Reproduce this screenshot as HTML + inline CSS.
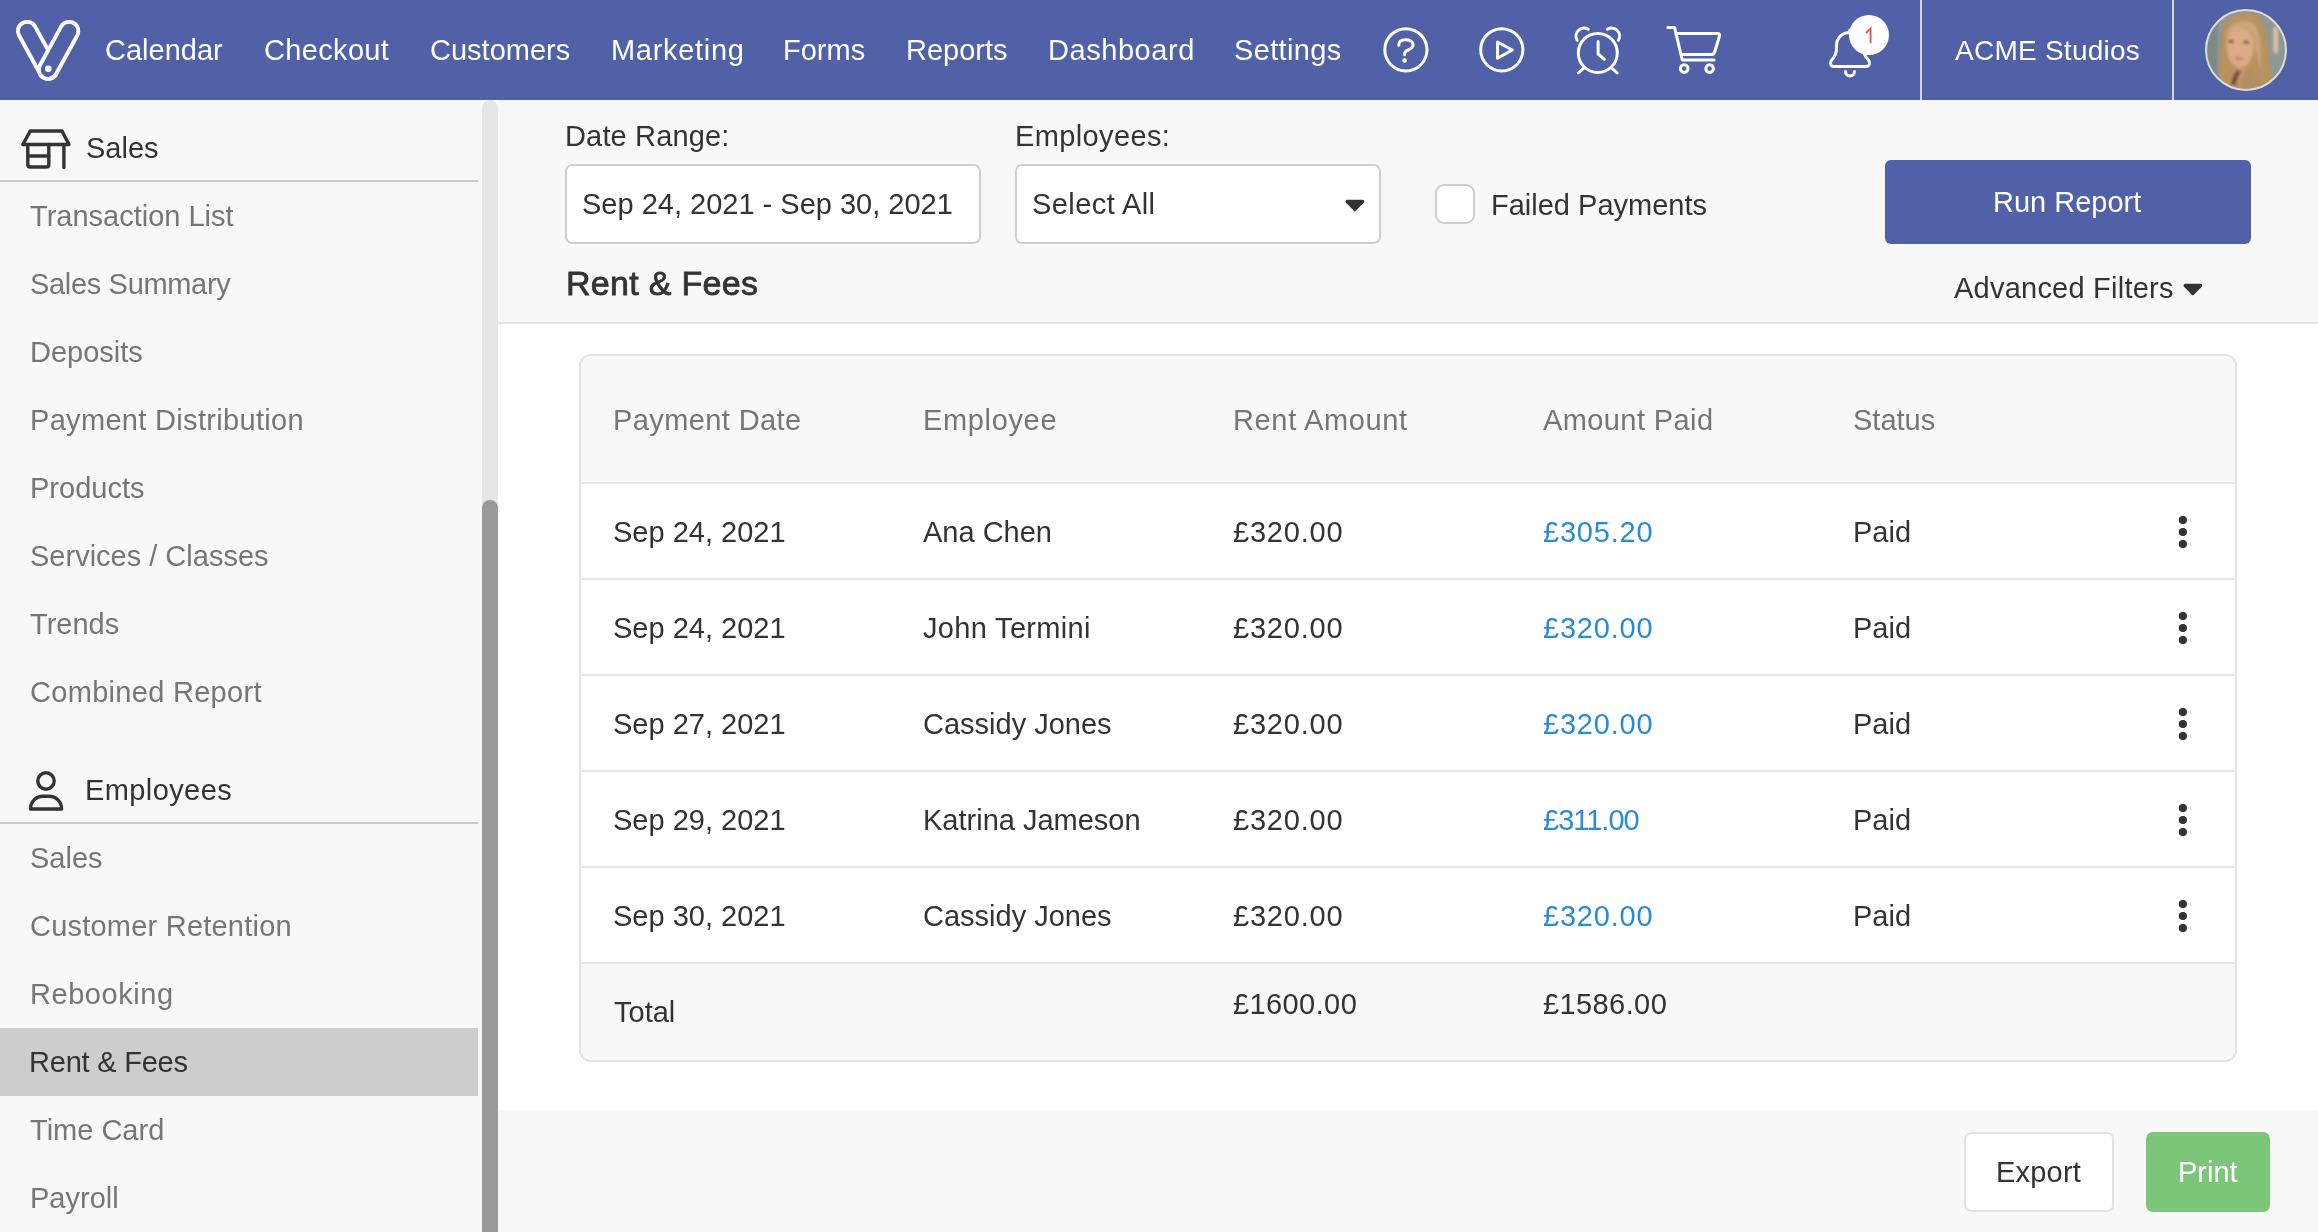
<!DOCTYPE html>
<html>
<head>
<meta charset="utf-8">
<style>
html,body{margin:0;padding:0;width:2318px;height:1232px;overflow:hidden;background:#fff;}
body{position:relative;font-family:"Liberation Sans",sans-serif;-webkit-font-smoothing:antialiased;}
.t{will-change:transform;}
.a{position:absolute;}
.t{position:absolute;white-space:nowrap;font-size:29px;line-height:29px;color:#333;}
#hdr{left:0;top:0;width:2318px;height:100px;background:#5161a8;}
.nav{color:#fff;top:36px;}
#side{left:0;top:100px;width:482px;height:1132px;background:#f8f8f8;}
.si{color:#767676;left:30px;}
.sh{color:#333;left:86px;}
.sdiv{left:0;width:478px;height:2px;background:#cacaca;}
#track{left:482px;top:100px;width:16px;height:1132px;background:#e6e6e6;border-radius:8px 8px 0 0;}
#thumb{left:482px;top:500px;width:16px;height:740px;background:#999;border-radius:8px;}
#topbar{left:498px;top:100px;width:1820px;height:222px;background:#f8f8f8;border-bottom:2px solid #e5e5e5;}
#mainw{left:498px;top:325px;width:1820px;height:785px;background:#fff;}
#foot{left:498px;top:1110px;width:1820px;height:122px;background:#f8f8f8;}
.box{background:#fff;border:2px solid #cfcfcf;border-radius:7px;box-sizing:border-box;}
#card{left:579px;top:354px;width:1658px;height:708px;border:2px solid #e3e3e3;border-radius:12px;box-sizing:border-box;background:#fff;overflow:hidden;}
.rowl{left:0;width:1654px;height:2px;background:#e6e6e6;}
.th{color:#767676;}
.blue{color:#2b8bd6;}
</style>
</head>
<body>
<!-- HEADER -->
<div id="hdr" class="a"></div>
<svg class="a" style="left:0;top:0" width="100" height="100" viewBox="0 0 100 100">
  <g fill="none" stroke="#fff" stroke-width="3.9">
    <rect x="-31.2" y="-9.2" width="62.4" height="18.4" rx="9.2" transform="translate(37.7 50.35) rotate(61.2)"/>
    <rect x="-31.2" y="-9.2" width="62.4" height="18.4" rx="9.2" fill="#5161a8" transform="translate(58.6 50.35) rotate(118.8)"/>
  </g>
  <circle cx="48.3" cy="68.7" r="3.3" fill="#fff"/>
</svg>
<div class="t nav" style="left:105px">Calendar</div>
<div class="t nav" style="left:264px;letter-spacing:0.34px">Checkout</div>
<div class="t nav" style="left:430px">Customers</div>
<div class="t nav" style="left:611px;letter-spacing:0.69px">Marketing</div>
<div class="t nav" style="left:783px">Forms</div>
<div class="t nav" style="left:906px">Reports</div>
<div class="t nav" style="left:1048px;letter-spacing:0.55px">Dashboard</div>
<div class="t nav" style="left:1234px;letter-spacing:0.34px">Settings</div>

<svg class="a" style="left:1360px;top:0" width="560" height="100" viewBox="1360 0 560 100">
  <g fill="none" stroke="#fff" stroke-width="3" stroke-linecap="round" stroke-linejoin="round">
    <circle cx="1405.9" cy="49.8" r="21.1"/>
    <path d="M1398.8 45.3 C1398.8 41.6 1401.6 39.8 1405.3 39.8 C1409.2 39.8 1413.1 41.5 1413.1 45 C1413.1 47.8 1410.6 48.9 1407.8 50.2 C1405.6 51.2 1404.7 52.3 1404.7 53.6 L1404.7 54.8"/>
    <circle cx="1501.8" cy="49.8" r="21.1"/>
    <path d="M1497.5 42 L1512.3 50 L1497.5 58.2 Z"/>
    <circle cx="1597.8" cy="52.9" r="19.5"/>
    <path d="M1598.1 41.6 L1598.1 54 L1604.2 59.2"/>
    <path d="M1577.2 40.3 A8 8 0 0 1 1588.2 29.3"/>
    <path d="M1618.4 40.3 A8 8 0 0 0 1607.4 29.3"/>
    <path d="M1583.4 68.4 L1578.4 73"/>
    <path d="M1612.2 68.4 L1617.2 73"/>
    <path d="M1667.8 27.6 L1674.6 27.6 L1682.3 60 L1714 60"/>
    <path d="M1676 33.4 L1717.5 33.4 Q1720.3 33.4 1719.5 36.2 L1714.6 52.3 Q1713.9 54.5 1711.6 54.5 L1681.2 54.5"/>
    <circle cx="1684.2" cy="68.6" r="3.8"/>
    <circle cx="1709.6" cy="68.6" r="3.8"/>
    <path d="M1850 32.5 C1842.2 32.5 1836.5 38 1836.5 45.5 L1836.5 48.5 C1836.5 54 1834.5 57.2 1831.8 59.8 C1829.6 62 1830.2 66.5 1833.8 66.5 L1866.2 66.5 C1869.8 66.5 1870.4 62 1868.2 59.8 C1865.5 57.2 1863.5 54 1863.5 48.5 L1863.5 45.5 C1863.5 38 1857.8 32.5 1850 32.5 Z"/>
    <path d="M1845.5 71.5 A4.5 4.5 0 0 0 1854.5 71.5"/>
    <path d="M1849.6 30.2 L1849.6 32.5"/>
  </g>
  <circle cx="1404.6" cy="60.5" r="2.35" fill="#fff"/>
  <circle cx="1869" cy="35" r="20" fill="#fff"/>
  <path d="M1870.6 43.2 L1870.6 28.6 L1866 33" fill="none" stroke="#e45d5d" stroke-width="2" stroke-linejoin="miter" stroke-miterlimit="3"/>
</svg>
<div class="a" style="left:1920px;top:0;width:2px;height:100px;background:#d6d4d4"></div>
<div class="t nav" style="left:1955px;font-size:28px;letter-spacing:0.25px">ACME Studios</div>
<div class="a" style="left:2172px;top:0;width:2px;height:100px;background:#d6d4d4"></div>
<svg class="a" style="left:2204px;top:8px" width="84" height="84" viewBox="0 0 84 84">
  <defs>
    <clipPath id="av"><circle cx="42" cy="42" r="40"/></clipPath>
    <filter id="bl" x="-20%" y="-20%" width="140%" height="140%"><feGaussianBlur stdDeviation="1.5"/></filter>
  </defs>
  <g clip-path="url(#av)">
    <rect x="0" y="0" width="84" height="84" fill="#8e9994"/>
    <g filter="url(#bl)">
      <rect x="0" y="0" width="14" height="84" fill="#7f8a86"/>
      <rect x="69.5" y="19" width="4.5" height="26" fill="#e7c3a2"/>
      <path d="M16 84 C14 62 15 36 20 18 C26 4 48 0 56 10 C64 22 64 44 66 56 C68 68 70 76 72 84 Z" fill="#b8915f"/>
      <ellipse cx="39" cy="64" rx="6" ry="7" fill="#c8946f"/>
      <path d="M27 76 C29 69 31 65 34 62 L37 64 C34 67 32 72 31 78 Z" fill="#5e4029"/>
      <ellipse cx="36" cy="38" rx="13.5" ry="21.5" fill="#dcab87"/>
      <path d="M36 84 C38 72 40 64 44 60 C50 64 58 74 62 84 Z" fill="#b58d62"/>
      <path d="M22 26 C26 12 44 8 52 18 C58 28 56 44 58 62 C52 50 50 32 44 24 C36 16 28 18 22 30 Z" fill="#c9a676"/>
      <ellipse cx="27" cy="33.5" rx="2.8" ry="1.3" fill="#2e211b"/>
      <ellipse cx="42.3" cy="34.3" rx="2.8" ry="1.3" fill="#2e211b"/>
      <ellipse cx="35" cy="50.5" rx="4.2" ry="1.3" fill="#b87468"/>
    </g>
  </g>
  <circle cx="42" cy="42" r="40" fill="none" stroke="#dcdcdc" stroke-width="2"/>
</svg>

<!-- SIDEBAR -->
<div id="side" class="a"></div>
<svg class="a" style="left:0;top:100px" width="100" height="740" viewBox="0 100 100 740">
  <g fill="none" stroke="#333" stroke-width="3.4" stroke-linecap="round" stroke-linejoin="round">
    <path d="M30.3 131 L62 131 L69 144.5 L22.8 144.5 Z"/>
    <path d="M27.8 144.5 L27.8 164.5 Q27.8 167 30.3 167 L46.3 167 Q48.8 167 48.8 164.5 L48.8 144.5"/>
    <path d="M27.8 156 L48.8 156"/>
    <path d="M63.9 144.5 L63.9 167.5"/>
    <circle cx="46" cy="781" r="8.2"/>
    <path d="M30.5 809 C30.5 801.5 36 796.3 43 796.3 L49 796.3 C56 796.3 61.6 801.5 61.6 809 Z"/>
  </g>
</svg>
<div class="t sh" style="top:134px">Sales</div>
<div class="a sdiv" style="top:180px"></div>
<div class="t si" style="top:202px">Transaction List</div>
<div class="t si" style="top:270px;letter-spacing:-0.33px">Sales Summary</div>
<div class="t si" style="top:338px">Deposits</div>
<div class="t si" style="top:406px;letter-spacing:0.32px">Payment Distribution</div>
<div class="t si" style="top:474px">Products</div>
<div class="t si" style="top:542px">Services / Classes</div>
<div class="t si" style="top:610px">Trends</div>
<div class="t si" style="top:678px;letter-spacing:0.3px">Combined Report</div>
<div class="t sh" style="top:776px;left:85px;letter-spacing:0.4px">Employees</div>
<div class="a sdiv" style="top:822px"></div>
<div class="t si" style="top:844px">Sales</div>
<div class="t si" style="top:912px;letter-spacing:0.22px">Customer Retention</div>
<div class="t si" style="top:980px;letter-spacing:0.55px">Rebooking</div>
<div class="a" style="left:0;top:1028px;width:478px;height:68px;background:#cdcdcd"></div>
<div class="t si" style="top:1048px;left:29px;letter-spacing:-0.22px;color:#333">Rent &amp; Fees</div>
<div class="t si" style="top:1116px">Time Card</div>
<div class="t si" style="top:1184px">Payroll</div>
<div id="track" class="a"></div>
<div id="thumb" class="a"></div>

<!-- MAIN TOP -->
<div id="topbar" class="a"></div>
<div class="t" style="left:565px;top:122px;letter-spacing:0.16px">Date Range:</div>
<div class="t" style="left:1015px;top:122px;letter-spacing:0.37px">Employees:</div>
<div class="a box" style="left:565px;top:164px;width:416px;height:80px"></div>
<div class="t" style="left:582px;top:190px">Sep 24, 2021 - Sep 30, 2021</div>
<div class="a box" style="left:1015px;top:164px;width:366px;height:80px"></div>
<div class="t" style="left:1032px;top:190px;letter-spacing:0.42px">Select All</div>
<svg class="a" style="left:1340px;top:195px" width="30" height="22" viewBox="0 0 30 22"><path d="M7.25 6.55 L22.45 6.55 L14.85 14.4 Z" fill="#333" stroke="#333" stroke-width="3.5" stroke-linejoin="round"/></svg>
<div class="a box" style="left:1435px;top:184px;width:40px;height:40px;border-radius:9px"></div>
<div class="t" style="left:1491px;top:191px">Failed Payments</div>
<div class="a" style="left:1885px;top:160px;width:366px;height:84px;background:#5161a8;border-radius:6px"></div>
<div class="t" style="left:1993px;top:188px;color:#fff">Run Report</div>
<div class="t" style="left:566px;top:266px;font-size:34px;line-height:34px;letter-spacing:0.3px;-webkit-text-stroke:0.8px #333">Rent &amp; Fees</div>
<div class="t" style="left:1954px;top:274px;letter-spacing:0.23px">Advanced Filters</div>
<svg class="a" style="left:2178px;top:279px" width="30" height="22" viewBox="0 0 30 22"><path d="M7.25 6.55 L22.45 6.55 L14.85 14.4 Z" fill="#333" stroke="#333" stroke-width="3.5" stroke-linejoin="round"/></svg>

<div id="mainw" class="a"></div>
<div id="foot" class="a"></div>

<!-- TABLE -->
<div id="card" class="a">
  <div class="a" style="left:0;top:0;width:1654px;height:126px;background:#f8f8f8"></div>
  <div class="a rowl" style="top:126px"></div>
  <div class="a rowl" style="top:222px"></div>
  <div class="a rowl" style="top:318px"></div>
  <div class="a rowl" style="top:414px"></div>
  <div class="a rowl" style="top:510px"></div>
  <div class="a" style="left:0;top:606px;width:1654px;height:100px;background:#f8f8f8"></div>
  <div class="a rowl" style="top:606px"></div>
</div>
<div class="t th" style="left:613px;top:406px;letter-spacing:0.4px">Payment Date</div>
<div class="t th" style="left:923px;top:406px;letter-spacing:0.65px">Employee</div>
<div class="t th" style="left:1233px;top:406px;letter-spacing:0.65px">Rent Amount</div>
<div class="t th" style="left:1543px;top:406px;letter-spacing:0.4px">Amount Paid</div>
<div class="t th" style="left:1853px;top:406px">Status</div>

<div class="t" style="left:613px;top:518px">Sep 24, 2021</div>
<div class="t" style="left:923px;top:518px">Ana Chen</div>
<div class="t" style="left:1233px;top:518px;letter-spacing:0.8px">£320.00</div>
<div class="t blue" style="left:1543px;top:518px;letter-spacing:0.8px">£305.20</div>
<div class="t" style="left:1853px;top:518px">Paid</div>

<div class="t" style="left:613px;top:614px">Sep 24, 2021</div>
<div class="t" style="left:923px;top:614px;letter-spacing:0.33px">John Termini</div>
<div class="t" style="left:1233px;top:614px;letter-spacing:0.8px">£320.00</div>
<div class="t blue" style="left:1543px;top:614px;letter-spacing:0.8px">£320.00</div>
<div class="t" style="left:1853px;top:614px">Paid</div>

<div class="t" style="left:613px;top:710px">Sep 27, 2021</div>
<div class="t" style="left:923px;top:710px">Cassidy Jones</div>
<div class="t" style="left:1233px;top:710px;letter-spacing:0.8px">£320.00</div>
<div class="t blue" style="left:1543px;top:710px;letter-spacing:0.8px">£320.00</div>
<div class="t" style="left:1853px;top:710px">Paid</div>

<div class="t" style="left:613px;top:806px">Sep 29, 2021</div>
<div class="t" style="left:923px;top:806px">Katrina Jameson</div>
<div class="t" style="left:1233px;top:806px;letter-spacing:0.8px">£320.00</div>
<div class="t blue" style="left:1543px;top:806px;letter-spacing:-1px">£311.00</div>
<div class="t" style="left:1853px;top:806px">Paid</div>

<div class="t" style="left:613px;top:902px">Sep 30, 2021</div>
<div class="t" style="left:923px;top:902px">Cassidy Jones</div>
<div class="t" style="left:1233px;top:902px;letter-spacing:0.8px">£320.00</div>
<div class="t blue" style="left:1543px;top:902px;letter-spacing:0.8px">£320.00</div>
<div class="t" style="left:1853px;top:902px">Paid</div>

<svg class="a" style="left:2170px;top:500px" width="30" height="440" viewBox="2170 500 30 440">
  <g fill="#333">
    <circle cx="2182.9" cy="520" r="4.1"/><circle cx="2182.9" cy="532" r="4.1"/><circle cx="2182.9" cy="544" r="4.1"/>
    <circle cx="2182.9" cy="616" r="4.1"/><circle cx="2182.9" cy="628" r="4.1"/><circle cx="2182.9" cy="640" r="4.1"/>
    <circle cx="2182.9" cy="712" r="4.1"/><circle cx="2182.9" cy="724" r="4.1"/><circle cx="2182.9" cy="736" r="4.1"/>
    <circle cx="2182.9" cy="808" r="4.1"/><circle cx="2182.9" cy="820" r="4.1"/><circle cx="2182.9" cy="832" r="4.1"/>
    <circle cx="2182.9" cy="904" r="4.1"/><circle cx="2182.9" cy="916" r="4.1"/><circle cx="2182.9" cy="928" r="4.1"/>
  </g>
</svg>

<div class="t" style="left:614px;top:998px">Total</div>
<div class="t" style="left:1233px;top:990px;letter-spacing:0.4px">£1600.00</div>
<div class="t" style="left:1543px;top:990px;letter-spacing:0.4px">£1586.00</div>

<!-- FOOTER -->
<div class="a box" style="left:1964px;top:1132px;width:150px;height:80px;border-color:#e3e3e3"></div>
<div class="t" style="left:1996px;top:1158px;letter-spacing:0.2px">Export</div>
<div class="a" style="left:2146px;top:1132px;width:124px;height:80px;background:#7cc67a;border-radius:7px"></div>
<div class="t" style="left:2178px;top:1158px;color:#fff">Print</div>
</body>
</html>
